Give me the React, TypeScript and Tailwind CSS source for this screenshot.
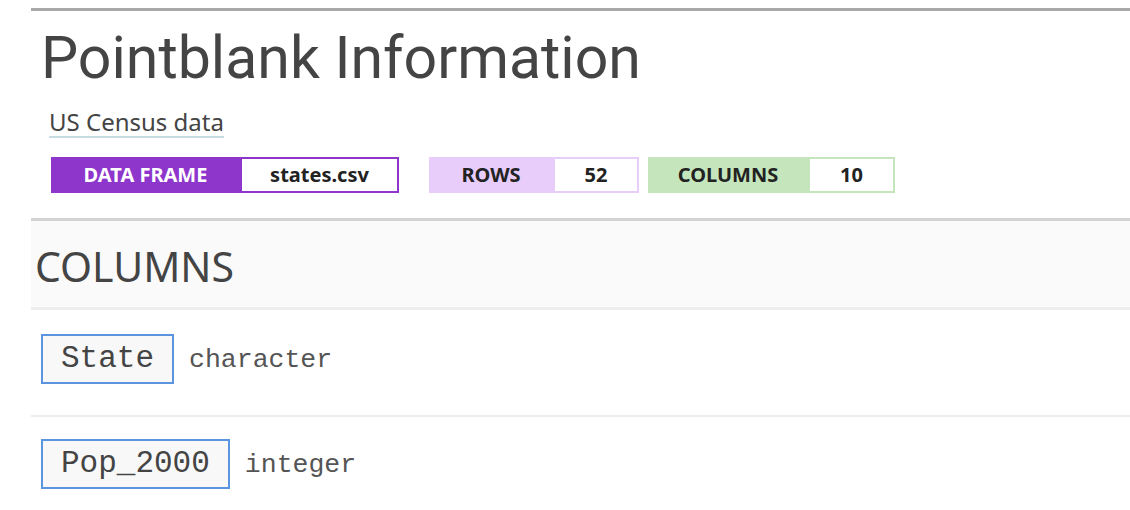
const sans = { fontFamily: '"Noto Sans", "Open Sans", sans-serif' };
const mono = { fontFamily: '"Liberation Mono", "Courier New", monospace' };

function Badge({ label, value, labelClass, valueClass }: { label: string; value: string; labelClass: string; valueClass: string }) {
  return (
    <div className="flex h-[36px] text-[20px] font-bold">
      <div className={`flex items-center justify-center ${labelClass}`}>{label}</div>
      <div className={`flex items-center justify-center bg-white border-2 text-[#222] ${valueClass}`}>{value}</div>
    </div>
  );
}

const columns = [
  { name: 'State', type: 'character' },
  { name: 'Pop_2000', type: 'integer' },
];

export default function App() {
  return (
    <div className="w-[1130px] h-[510px] overflow-hidden bg-white" style={sans}>
      <div className="ml-[31px] pt-[8px]">
        <div className="border-t-[3px] border-[#a8a8a8]">
          <h1
            className="pl-[10px] pt-[11px] text-[59px] leading-[72px] text-[#444]"
            style={{ fontFamily: 'Roboto, "Noto Sans", sans-serif' }}
          >
            Pointblank Information
          </h1>
          <div className="pl-[18px] mt-[14px]">
            <span className="inline-block text-[24px] leading-[28px] text-[#444] border-b-2 border-[#c5dce3]">US Census data</span>
          </div>
          <div className="flex items-center pl-[20px] mt-[19px]">
            <Badge label="DATA FRAME" value="states.csv" labelClass="w-[189px] bg-[#8e35cc] text-white" valueClass="w-[159px] border-[#8e35cc]" />
            <div className="w-[30px]" />
            <Badge label="ROWS" value="52" labelClass="w-[124px] bg-[#e8cdfb] text-[#222]" valueClass="w-[86px] border-[#e8cdfb]" />
            <div className="w-[9px]" />
            <Badge label="COLUMNS" value="10" labelClass="w-[160px] bg-[#c5e6bc] text-[#222]" valueClass="w-[87px] border-[#c5e6bc]" />
          </div>
        </div>

        <div className="mt-[25px] border-t-[3px] border-[#d3d3d3]">
          <div className="h-[89px] bg-[#fafafa] border-b-[3px] border-[#eeeeee] flex items-center pl-[4px]">
            <h2 className="text-[41px] text-[#444] pt-[6px]">COLUMNS</h2>
          </div>
          {columns.map((c, i) => (
            <div
              key={c.name}
              className={`flex items-baseline ${i === 0 ? 'pt-[24px] pb-[31px] border-b-2 border-[#ececec]' : 'pt-[22px] pb-[32px]'}`}
            >
              <div
                className="ml-[10px] h-[50px] px-[18px] flex items-center border-2 border-[#5b95e0] bg-[#f8f8f8] text-[31px] text-[#444]"
                style={mono}
              >
                {c.name}
              </div>
              <span className="ml-[15px] text-[26.5px] text-[#555]" style={mono}>
                {c.type}
              </span>
            </div>
          ))}
        </div>
      </div>
    </div>
  );
}
